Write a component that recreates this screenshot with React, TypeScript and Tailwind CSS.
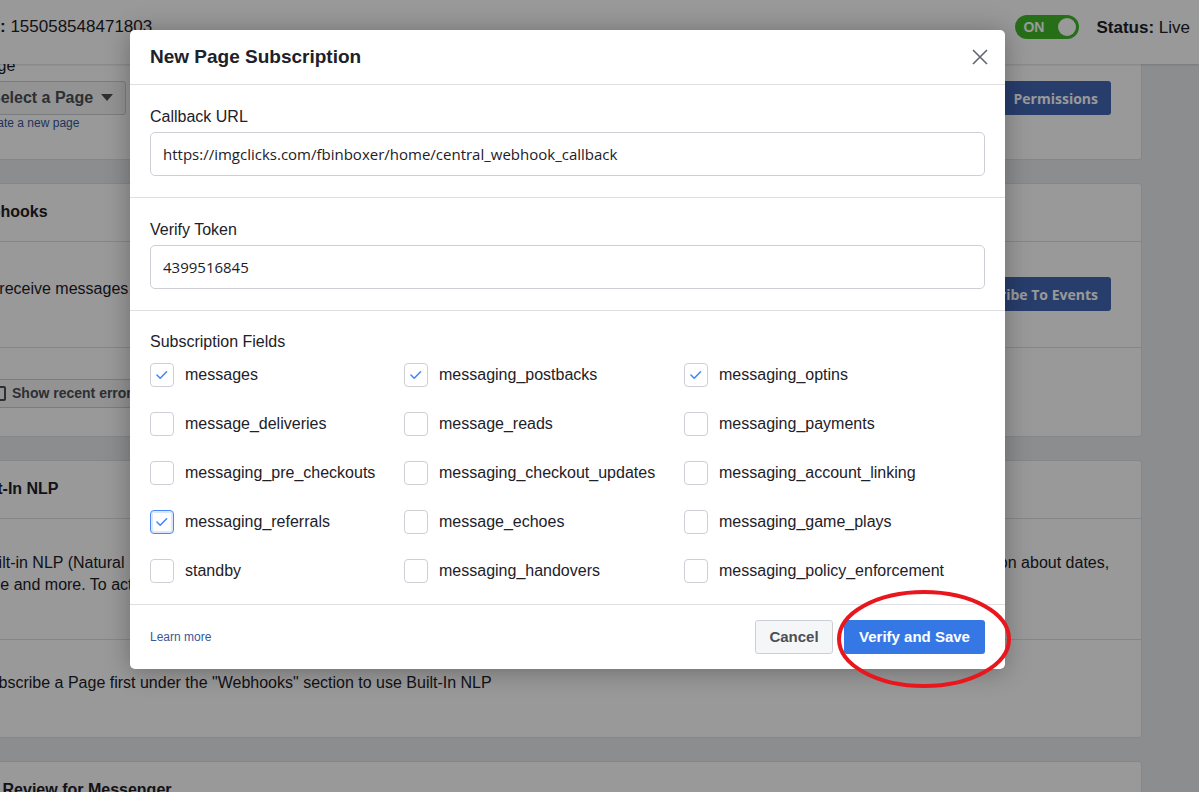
import React from "react";

const fields: [string, boolean, boolean?][] = [
	["messages", true],
	["messaging_postbacks", true],
	["messaging_optins", true],
	["message_deliveries", false],
	["message_reads", false],
	["messaging_payments", false],
	["messaging_pre_checkouts", false],
	["messaging_checkout_updates", false],
	["messaging_account_linking", false],
	["messaging_referrals", true, true],
	["message_echoes", false],
	["messaging_game_plays", false],
	["standby", false],
	["messaging_handovers", false],
	["messaging_policy_enforcement", false],
];

const Check = ({ checked, focused }: { checked: boolean; focused?: boolean }) => (
	<span
		className={
			focused
				? "flex h-6 w-6 shrink-0 items-center justify-center rounded-[4px] border border-[#4a86f7] bg-white shadow-[inset_0_0_0_2px_#dce8fd]"
				: "flex h-6 w-6 shrink-0 items-center justify-center rounded-[4px] border border-[#ccd0d5] bg-white"
		}
	>
		{checked && (
			<svg width="24" height="24" viewBox="0 0 24 24" fill="none">
				<path d="M6.5 12 L10 15.5 L17 8.5" stroke="#4080ff" strokeWidth="1.6" strokeLinecap="round" strokeLinejoin="round" />
			</svg>
		)}
	</span>
);

const Card = ({ children }: { children: React.ReactNode }) => (
	<div className="rounded-[3px] border border-[#dddfe2] bg-white">{children}</div>
);

const CardHeader = ({ title }: { title: string }) => (
	<div className="flex h-[58px] items-center border-b border-[#dddfe2] px-[12px] pb-[2px] text-[16px] font-bold text-[#1d2129]">
		{title}
	</div>
);

const BlueButton = ({ label }: { label: string }) => (
	<button className="flex h-[34px] shrink-0 items-center rounded-[3px] bg-[#4267b2] px-[13px] font-['Open_Sans',sans-serif] text-[14px] font-bold text-white">
		{label}
	</button>
);

export default function App() {
	return (
		<div className="relative h-[792px] w-[1199px] overflow-hidden bg-[#e9ebee] font-['Liberation_Sans',Arial,sans-serif] text-[#1d2129]">
			{/* top bar */}
			<div className="relative z-10 h-16 bg-white shadow-[0_1px_2px_rgba(0,0,0,0.15)]">
				<div className="flex h-[54px] items-center">
					<div className="-ml-[17px] text-[17px]">
						<span className="font-bold">ID:</span> 155058548471803
					</div>
					<div className="ml-auto flex items-center gap-[17px] pr-[9px]">
						<div className="flex h-[24px] w-[64px] items-center justify-between rounded-full bg-[#42b72a] pl-[8px] pr-[3px]">
							<span className="text-[14px] font-bold text-white">ON</span>
							<span className="h-[18px] w-[18px] rounded-full bg-white" />
						</div>
						<div className="mt-[2px] text-[17px]">
							<span className="font-bold">Status:</span> Live
						</div>
					</div>
				</div>
			</div>

			{/* page content */}
			<div className="-mt-[24px] -ml-[46px] flex w-[1188px] flex-col gap-[23px]">
				<Card>
					<div className="px-[23px] pr-[30px] pt-[15px] pb-[28px]">
						<div className="text-[16px] leading-5">Page</div>
						<div className="mt-[5px] flex items-start justify-between">
							<div className="flex flex-col">
								<button className="flex h-[34px] w-[148px] items-center gap-2 rounded-[3px] border border-[#ccd0d5] bg-[#f5f6f7] pl-[11px] text-[16px] font-bold text-[#4b4f56]">
									Select a Page
									<svg width="12" height="8" viewBox="0 0 12 8">
										<path d="M0 0 H12 L6 7 Z" fill="#4b4f56" />
									</svg>
								</button>
								<a className="text-[12px] leading-4 text-[#365899]">Create a new page</a>
							</div>
							<BlueButton label="Permissions" />
						</div>
					</div>
				</Card>

				<Card>
					<CardHeader title="Webhooks" />
					<div className="flex h-[106px] items-start justify-between border-b border-[#dddfe2] pl-[23px] pr-[30px] pt-[35px]">
						<p className="mt-[2px] overflow-hidden text-[16px] leading-5 whitespace-nowrap">
							To receive messages and other events sent by Messenger users, the app should enable webhooks integration.
						</p>
						<BlueButton label="Subscribe To Events" />
					</div>
					<div className="h-[88px] pl-[23px] pt-[31px]">
						<button className="flex h-[29px] items-center gap-[6px] rounded-[3px] border border-[#ccd0d5] bg-[#f5f6f7] pl-[13px] pr-3 text-[14px] font-bold text-[#4b4f56]">
							<span className="h-[15px] w-[14px] rounded-[2px] border-2 border-[#4b4f56]" />
							Show recent errors
						</button>
					</div>
				</Card>

				<Card>
					<CardHeader title="Built-In NLP" />
					<div className="h-[121px] border-b border-[#dddfe2] pl-[24px] pt-[33px] text-[16px] leading-[22px] whitespace-nowrap">
						<p>
							Built-in NLP (Natural Language Processing) helps you detect the meaning of messages that people send to your bot, such as the basic information about dates,
						</p>
						<p>time and more. To activate it, select a Page and choose the language model that fits your bot.</p>
					</div>
					<div className="h-[97px] pl-[24px] pt-[32px] text-[16px] leading-[22px]">
						Subscribe a Page first under the "Webhooks" section to use Built-In NLP
					</div>
				</Card>

				<Card>
					<CardHeader title="App Review for Messenger" />
					<div className="h-[120px]" />
				</Card>
			</div>

			{/* dim overlay */}
			<div className="absolute inset-0 z-20 bg-black/40" />

			{/* dialog */}
			<div className="absolute left-[130px] top-[30px] z-30 w-[875px] rounded-[5px] bg-white shadow-[0_2px_26px_rgba(0,0,0,0.3)]">
				<div className="flex h-[55px] items-center justify-between border-b border-[#dddfe2] pl-5 pr-[17px]">
					<h2 className="mt-[1px] text-[19px] font-bold text-[#1d2129]">New Page Subscription</h2>
					<svg width="16" height="16" viewBox="0 0 16 16">
						<path d="M1 1 L15 15 M15 1 L1 15" stroke="#606770" strokeWidth="1.6" />
					</svg>
				</div>

				<div className="border-b border-[#dddfe2] px-5 pt-[22px] pb-[21px]">
					<div className="text-[16px] leading-5">Callback URL</div>
					<div className="mt-[5px] flex h-[44px] items-center rounded-[5px] border border-[#ccd0d5] px-[12px] font-['Open_Sans',sans-serif] text-[15px] text-[#1d2129]">
						https://imgclicks.com/fbinboxer/home/central_webhook_callback
					</div>
				</div>

				<div className="border-b border-[#dddfe2] px-5 pt-[22px] pb-[21px]">
					<div className="text-[16px] leading-5">Verify Token</div>
					<div className="mt-[5px] flex h-[44px] items-center rounded-[5px] border border-[#ccd0d5] px-[12px] font-['Open_Sans',sans-serif] text-[15px] text-[#1d2129]">
						4399516845
					</div>
				</div>

				<div className="border-b border-[#dddfe2] px-5 pt-[21px] pb-[21px]">
					<div className="text-[16px] leading-5">Subscription Fields</div>
					<div className="mt-[11px] grid grid-cols-[254px_280px_1fr] gap-y-[25px]">
						{fields.map(([name, checked, focused]) => (
							<label key={name} className="flex h-6 items-center gap-[11px] text-[16px]">
								<Check checked={checked} focused={focused} />
								{name}
							</label>
						))}
					</div>
				</div>

				<div className="flex h-[64px] items-center justify-between px-5">
					<a className="text-[12px] text-[#385898]">Learn more</a>
					<div className="flex gap-[11px]">
						<button className="h-[34px] w-[78px] rounded-[3px] border border-[#ccd0d5] bg-[#f5f6f7] text-[15px] font-bold text-[#4b4f56]">
							Cancel
						</button>
						<button className="h-[34px] w-[141px] rounded-[3px] bg-[#3578e5] text-[15px] font-bold text-white">
							Verify and Save
						</button>
					</div>
				</div>
			</div>

			{/* annotation */}
			<svg className="absolute left-[835px] top-[588px] z-40" width="178" height="102" viewBox="0 0 178 102">
				<ellipse cx="89" cy="51" rx="85" ry="47" fill="none" stroke="#e8161d" strokeWidth="4" />
			</svg>
		</div>
	);
}
